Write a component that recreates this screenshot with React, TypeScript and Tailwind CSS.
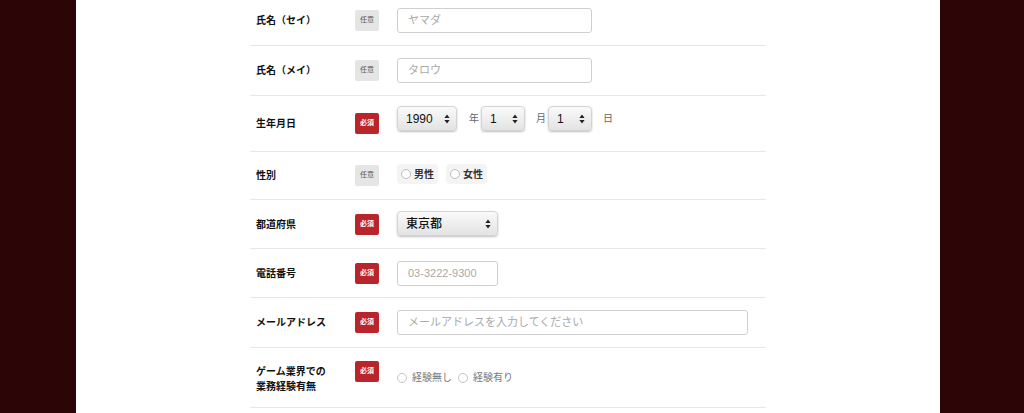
import React from 'react';

const FONT = "font-['Helvetica_Neue','Liberation_Sans','Noto_Sans_CJK_JP',sans-serif]";

function Badge({ required }: { required?: boolean }) {
  return required ? (
    <span className="flex h-[21px] w-[24px] shrink-0 items-center justify-center rounded-[2px] bg-[#b9252b] text-[7px] font-bold text-white">必須</span>
  ) : (
    <span className="flex h-[21px] w-[24px] shrink-0 items-center justify-center rounded-[2px] bg-[#e5e5e5] text-[7px] text-[#555]">任意</span>
  );
}

function Arrows() {
  return (
    <svg width="6" height="10" viewBox="0 0 6 10" className="shrink-0">
      <path d="M3 0.5 L5.6 4 L0.4 4 Z" fill="#222" />
      <path d="M3 9.5 L5.6 6 L0.4 6 Z" fill="#222" />
    </svg>
  );
}

function FakeSelect({ value, width, bold }: { value: string; width: string; bold?: boolean }) {
  return (
    <div className={`flex h-[25px] ${width} items-center justify-between rounded-[4px] border border-[#d4d4d4] bg-gradient-to-b from-[#fafafa] to-[#e3e3e3] pl-[8px] pr-[6px] shadow-[0_1px_2px_rgba(0,0,0,0.25)]`}>
      <span className={`text-[12px] text-[#111] ${bold ? 'font-medium' : ''}`}>{value}</span>
      <Arrows />
    </div>
  );
}

function TextBox({ placeholder, width }: { placeholder: string; width: string }) {
  return (
    <div className={`flex h-[25px] ${width} items-center rounded-[3px] border border-[#cfcfcf] bg-white px-[10px] text-[11px] text-[#a9a9a9]`}>
      {placeholder}
    </div>
  );
}

function Row({ label, required, children, cell }: { label: React.ReactNode; required?: boolean; children: React.ReactNode; cell: string }) {
  return (
    <div className="flex items-center border-b border-[#e6e6e6]">
      <div className="flex w-[147px] shrink-0 items-start justify-between pl-[6px] pr-[18px]">
        <span className="mt-[3px] text-[10px] font-bold leading-[15px] text-[#111]">{label}</span>
        <Badge required={required} />
      </div>
      <div className={`flex flex-1 items-center ${cell}`}>{children}</div>
    </div>
  );
}

function Pill({ text }: { text: string }) {
  return (
    <div className="flex h-[20px] items-center gap-[3px] rounded-[4px] bg-[#f4f4f4] px-[4px]">
      <span className="h-[10px] w-[10px] rounded-full border border-[#bdbdbd] bg-white" />
      <span className="text-[10px] font-bold text-[#333]">{text}</span>
    </div>
  );
}

function Radio({ text }: { text: string }) {
  return (
    <div className="flex items-center gap-[5px]">
      <span className="h-[10px] w-[10px] rounded-full border border-[#c4c4c4] bg-white" />
      <span className="text-[10px] text-[#777]">{text}</span>
    </div>
  );
}

export default function App() {
  return (
    <div className={`flex h-[413px] w-[1024px] overflow-hidden bg-[#2c0606] ${FONT}`}>
      <div className="w-[76px] shrink-0" />
      <div className="w-[864px] shrink-0 bg-white pl-[174px]">
        <div className="-mt-[4px] w-[516px]">
          <Row label="氏名（セイ）" cell="py-[12px]">
            <TextBox placeholder="ヤマダ" width="w-[195px]" />
          </Row>
          <Row label="氏名（メイ）" cell="py-[12px]">
            <TextBox placeholder="タロウ" width="w-[195px]" />
          </Row>
          <Row label="生年月日" required cell="pt-[10px] pb-[20px]">
            <FakeSelect value="1990" width="w-[60px]" />
            <span className="ml-[12px] mr-[2px] text-[10px] text-[#666]">年</span>
            <FakeSelect value="1" width="w-[44px]" />
            <span className="ml-[11px] mr-[2px] text-[10px] text-[#666]">月</span>
            <FakeSelect value="1" width="w-[44px]" />
            <span className="ml-[11px] text-[10px] text-[#666]">日</span>
          </Row>
          <Row label="性別" cell="pt-[12px] pb-[15px] gap-[8px]">
            <Pill text="男性" />
            <Pill text="女性" />
          </Row>
          <Row label="都道府県" required cell="pt-[11px] pb-[12px]">
            <FakeSelect value="東京都" width="w-[101px]" bold />
          </Row>
          <Row label="電話番号" required cell="pt-[12px] pb-[11px]">
            <TextBox placeholder="03-3222-9300" width="w-[101px]" />
          </Row>
          <Row label="メールアドレス" required cell="pt-[12px] pb-[12px]">
            <TextBox placeholder="メールアドレスを入力してください" width="w-[351px]" />
          </Row>
          <Row
            label={<>ゲーム業界での<br />業務経験有無</>}
            required
            cell="h-[59px] gap-[6px]"
          >
            <Radio text="経験無し" />
            <Radio text="経験有り" />
          </Row>
        </div>
      </div>
      <div className="flex-1" />
    </div>
  );
}
